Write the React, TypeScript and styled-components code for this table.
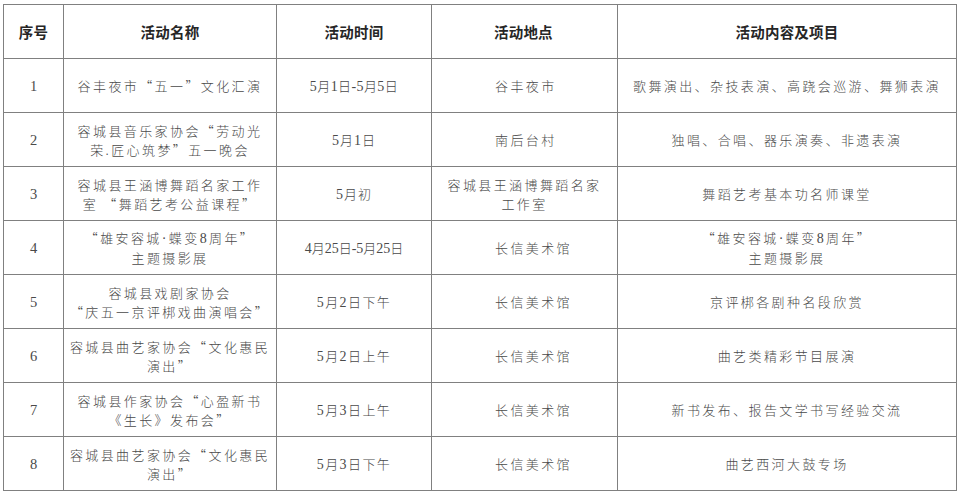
import React from "react";
import styled, { createGlobalStyle } from "styled-components";

const GlobalStyle = createGlobalStyle`
  html, body { margin: 0; padding: 0; background: #ffffff; }
  body { font-family: "Noto Sans CJK SC", sans-serif; }
`;

const Page = styled.div`
  padding: 4px 4px 0 3px;
  background: #ffffff;
`;

const Table = styled.table`
  border-collapse: collapse;
  table-layout: fixed;
  width: 953px;
`;

const HeadCell = styled.th<{ $align?: "left" | "center" }>`
  height: 53px;
  padding: 0 0 0 ${(p) => (p.$align === "left" ? "62px" : "0")};
  border: 1px solid #808080;
  text-align: ${(p) => p.$align ?? "center"};
  vertical-align: middle;
  font-family: "Noto Sans CJK SC", sans-serif;
  font-size: 14.5px;
  font-weight: 700;
  color: #262626;
  letter-spacing: 0.2px;
`;

const Cell = styled.td<{ $align?: "left" | "center"; $spacing?: number }>`
  height: 53px;
  padding: 0 0 0 ${(p) => (p.$align === "left" ? "63px" : "0")};
  border: 1px solid #808080;
  text-align: ${(p) => p.$align ?? "center"};
  vertical-align: middle;
  font-family: "Noto Sans CJK SC", sans-serif;
  font-size: 13px;
  font-weight: 300;
  line-height: 19px;
  color: #4a4a4a;
  letter-spacing: ${(p) => p.$spacing ?? 2.4}px;
`;

const Num = styled.span<{ $size?: number }>`
  font-family: "Liberation Serif", serif;
  font-size: ${(p) => p.$size ?? 14}px;
  font-weight: 400;
`;

type Row = {
  no: string;
  name: string[];
  time: string;
  timeSpacing: number;
  place: string[];
  placeAlign: "left" | "center";
  content: string[];
};

const rows: Row[] = [
  {
    no: "1",
    name: ["谷丰夜市“五一”文化汇演"],
    time: "5月1日-5月5日",
    timeSpacing: 0.4,
    place: ["谷丰夜市"],
    placeAlign: "left",
    content: ["歌舞演出、杂技表演、高跷会巡游、舞狮表演"],
  },
  {
    no: "2",
    name: ["容城县音乐家协会“劳动光", "荣.匠心筑梦”五一晚会"],
    time: "5月1日",
    timeSpacing: 1,
    place: ["南后台村"],
    placeAlign: "left",
    content: ["独唱、合唱、器乐演奏、非遗表演"],
  },
  {
    no: "3",
    name: ["容城县王涵博舞蹈名家工作", "室 “舞蹈艺考公益课程”"],
    time: "5月初",
    timeSpacing: 1,
    place: ["容城县王涵博舞蹈名家", "工作室"],
    placeAlign: "center",
    content: ["舞蹈艺考基本功名师课堂"],
  },
  {
    no: "4",
    name: ["“雄安容城·蝶变8周年”", "主题摄影展"],
    time: "4月25日-5月25日",
    timeSpacing: 0,
    place: ["长信美术馆"],
    placeAlign: "left",
    content: ["“雄安容城·蝶变8周年”", "主题摄影展"],
  },
  {
    no: "5",
    name: ["容城县戏剧家协会", "“庆五一京评梆戏曲演唱会”"],
    time: "5月2日下午",
    timeSpacing: 1.4,
    place: ["长信美术馆"],
    placeAlign: "left",
    content: ["京评梆各剧种名段欣赏"],
  },
  {
    no: "6",
    name: ["容城县曲艺家协会“文化惠民", "演出”"],
    time: "5月2日上午",
    timeSpacing: 1.4,
    place: ["长信美术馆"],
    placeAlign: "left",
    content: ["曲艺类精彩节目展演"],
  },
  {
    no: "7",
    name: ["容城县作家协会“心盈新书", "《生长》发布会”"],
    time: "5月3日上午",
    timeSpacing: 1.4,
    place: ["长信美术馆"],
    placeAlign: "left",
    content: ["新书发布、报告文学书写经验交流"],
  },
  {
    no: "8",
    name: ["容城县曲艺家协会“文化惠民", "演出”"],
    time: "5月3日下午",
    timeSpacing: 1.4,
    place: ["长信美术馆"],
    placeAlign: "left",
    content: ["曲艺西河大鼓专场"],
  },
];

// Digits, the date dash and the middle dot are set in a serif face, as in the source document.
const SERIF_RUN = /([0-9\-·]+)/;
const SERIF_ONLY = /^[0-9\-·]+$/;

const Mixed: React.FC<{ text: string }> = ({ text }) => {
  const parts = text.split(SERIF_RUN);
  return (
    <>
      {parts.map((p, i) =>
        SERIF_ONLY.test(p) ? <Num key={i}>{p}</Num> : <React.Fragment key={i}>{p}</React.Fragment>
      )}
    </>
  );
};

const Lines: React.FC<{ lines: string[] }> = ({ lines }) => (
  <>
    {lines.map((l, i) => (
      <React.Fragment key={i}>
        {i > 0 && <br />}
        <Mixed text={l} />
      </React.Fragment>
    ))}
  </>
);

export default function App() {
  return (
    <Page>
      <GlobalStyle />
      <Table>
        <colgroup>
          <col style={{ width: 60 }} />
          <col style={{ width: 213 }} />
          <col style={{ width: 155 }} />
          <col style={{ width: 186 }} />
          <col style={{ width: 339 }} />
        </colgroup>
        <thead>
          <tr>
            <HeadCell>序号</HeadCell>
            <HeadCell>活动名称</HeadCell>
            <HeadCell>活动时间</HeadCell>
            <HeadCell $align="left">活动地点</HeadCell>
            <HeadCell>活动内容及项目</HeadCell>
          </tr>
        </thead>
        <tbody>
          {rows.map((r) => (
            <tr key={r.no}>
              <Cell $spacing={0}>
                <Num $size={14.5}>{r.no}</Num>
              </Cell>
              <Cell>
                <Lines lines={r.name} />
              </Cell>
              <Cell $spacing={r.timeSpacing}>
                <Mixed text={r.time} />
              </Cell>
              <Cell $align={r.placeAlign}>
                <Lines lines={r.place} />
              </Cell>
              <Cell>
                <Lines lines={r.content} />
              </Cell>
            </tr>
          ))}
        </tbody>
      </Table>
    </Page>
  );
}
